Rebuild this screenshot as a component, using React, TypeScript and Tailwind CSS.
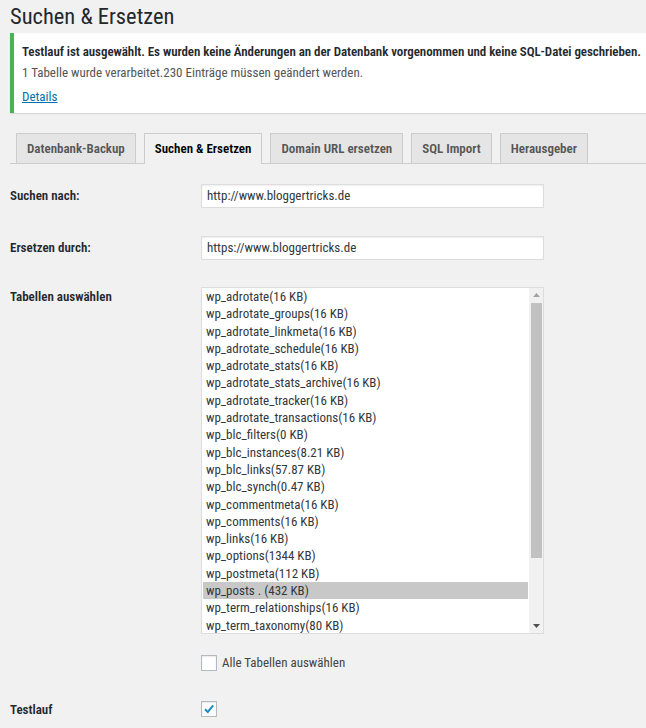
import React from 'react'

const tables = [
  'wp_adrotate(16 KB)',
  'wp_adrotate_groups(16 KB)',
  'wp_adrotate_linkmeta(16 KB)',
  'wp_adrotate_schedule(16 KB)',
  'wp_adrotate_stats(16 KB)',
  'wp_adrotate_stats_archive(16 KB)',
  'wp_adrotate_tracker(16 KB)',
  'wp_adrotate_transactions(16 KB)',
  'wp_blc_filters(0 KB)',
  'wp_blc_instances(8.21 KB)',
  'wp_blc_links(57.87 KB)',
  'wp_blc_synch(0.47 KB)',
  'wp_commentmeta(16 KB)',
  'wp_comments(16 KB)',
  'wp_links(16 KB)',
  'wp_options(1344 KB)',
  'wp_postmeta(112 KB)',
  'wp_posts . (432 KB)',
  'wp_term_relationships(16 KB)',
  'wp_term_taxonomy(80 KB)',
]

const tabs = ['Datenbank-Backup', 'Suchen & Ersetzen', 'Domain URL ersetzen', 'SQL Import', 'Herausgeber']

function Checkbox({ checked }: { checked?: boolean }) {
  return (
    <span className="flex h-[16px] w-[16px] shrink-0 items-center justify-center border border-[#b4b9be] bg-white shadow-[inset_0_1px_2px_rgba(0,0,0,0.1)]">
      {checked && (
        <svg width="12" height="12" viewBox="0 0 12 12">
          <path d="M2 6.2 L4.8 9 L10.2 2.4" fill="none" stroke="#1e8cbe" strokeWidth="2" />
        </svg>
      )}
    </span>
  )
}

export default function App() {
  return (
    <div className="min-h-[728px] w-[646px] overflow-hidden bg-[#f1f1f1] text-[13px] text-[#444] [font-family:'Roboto_Condensed',Roboto,sans-serif]">
      <h1 className="pl-[10px] pt-[2px] text-[22.5px] leading-[29px] text-[#23282d]">Suchen &amp; Ersetzen</h1>

      {/* notice */}
      <div className="ml-[10px] mt-[2px] h-[80px] whitespace-nowrap border-l-4 border-[#46b450] bg-white pl-[8px] pt-[10px] shadow-[0_1px_1px_rgba(0,0,0,0.1)]">
        <p className="font-semibold leading-[18px] tracking-[-0.06px] text-[#23282d]">
          Testlauf ist ausgewählt. Es wurden keine Änderungen an der Datenbank vorgenommen und keine SQL-Datei geschrieben.
        </p>
        <p className="mt-[3px] leading-[18px] text-[#555]">
          1 Tabelle wurde verarbeitet.230 Einträge müssen geändert werden.
        </p>
        <a className="mt-[6px] block leading-[18px] text-[#0073aa] underline">Details</a>
      </div>

      {/* tabs */}
      <div className="ml-[10px] mt-[20px] flex h-[31px] items-end gap-[8px] whitespace-nowrap border-b border-[#ccc] pl-[6px]">
        {tabs.map((t, i) => (
          <div
            key={t}
            className={
              i === 1
                ? 'mb-[-1px] flex h-[31px] items-center border border-b-0 border-[#ccc] bg-[#f1f1f1] px-[10px] font-semibold text-[#000]'
                : 'flex h-[30px] items-center border border-b-0 border-[#ccc] bg-[#e5e5e5] px-[10px] font-semibold text-[#555]'
            }
          >
            {t}
          </div>
        ))}
      </div>

      {/* form */}
      <div className="mt-[20px] pl-[10px]">
        <div className="flex items-center">
          <div className="w-[191px] font-semibold text-[#23282d]">Suchen nach:</div>
          <div className="flex h-[24px] w-[343px] items-center border border-[#ddd] bg-white px-[5px] text-[#32373c] shadow-[inset_0_1px_2px_rgba(0,0,0,0.07)]">
            http://www.bloggertricks.de
          </div>
        </div>

        <div className="mt-[28px] flex items-center">
          <div className="w-[191px] font-semibold text-[#23282d]">Ersetzen durch:</div>
          <div className="flex h-[24px] w-[343px] items-center border border-[#ddd] bg-white px-[5px] text-[#32373c] shadow-[inset_0_1px_2px_rgba(0,0,0,0.07)]">
            https://www.bloggertricks.de
          </div>
        </div>

        <div className="mt-[27px] flex items-start">
          <div className="w-[191px] pt-[1px] font-semibold leading-[17px] text-[#23282d]">Tabellen auswählen</div>
          <div className="flex h-[347px] w-[343px] border border-[#ddd] bg-white">
            <div className="flex-1 overflow-hidden px-[1px]">
              {tables.map((t) => (
                <div
                  key={t}
                  className={
                    t.startsWith('wp_posts .')
                      ? 'h-[17.3px] whitespace-nowrap bg-[#c8c8c8] pl-[3px] leading-[17.3px] text-[#32373c]'
                      : 'h-[17.3px] whitespace-nowrap pl-[3px] leading-[17.3px] text-[#32373c]'
                  }
                >
                  {t}
                </div>
              ))}
            </div>
            {/* scrollbar */}
            <div className="flex w-[14px] flex-col items-center bg-[#f1f1f1]">
              <div className="flex h-[14px] items-center justify-center">
                <svg width="7" height="4" viewBox="0 0 7 4">
                  <path d="M0 4 L3.5 0 L7 4 Z" fill="#a3a3a3" />
                </svg>
              </div>
              <div className="mt-[1px] h-[255px] w-[11px] bg-[#c1c1c1]" />
              <div className="flex-1" />
              <div className="flex h-[14px] items-center justify-center">
                <svg width="7" height="4" viewBox="0 0 7 4">
                  <path d="M0 0 L7 0 L3.5 4 Z" fill="#505050" />
                </svg>
              </div>
            </div>
          </div>
        </div>

        <div className="mt-[19px] flex items-center pl-[191px]">
          <Checkbox />
          <span className="ml-[5px] text-[#444]">Alle Tabellen auswählen</span>
        </div>

        <div className="mt-[27px] flex items-center">
          <div className="w-[191px] font-semibold text-[#23282d]">Testlauf</div>
          <Checkbox checked />
        </div>
      </div>
    </div>
  )
}
